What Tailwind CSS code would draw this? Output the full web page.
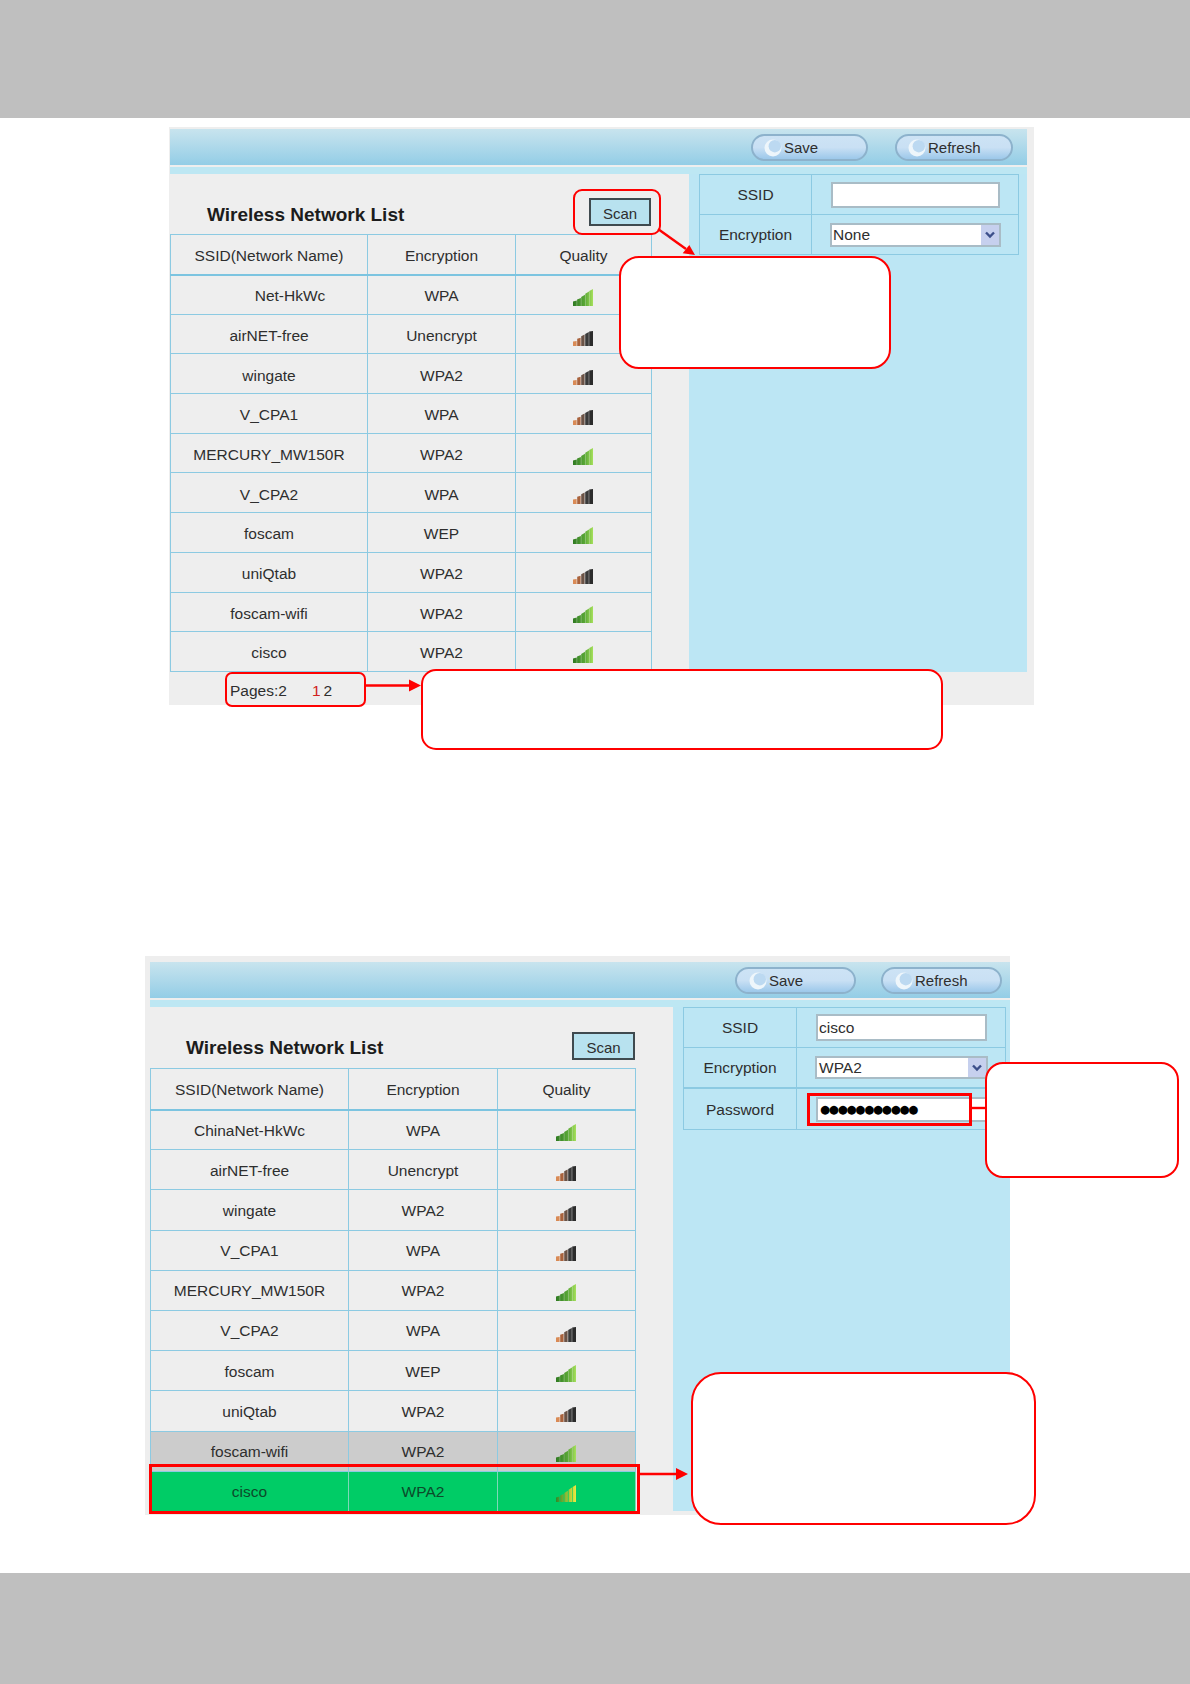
<!DOCTYPE html>
<html lang="en">
<head>
  <meta charset="UTF-8" />
  <title>Wireless Network List</title>
  <script src="https://cdn.jsdelivr.net/npm/@tailwindcss/browser@4"></script>
</head>
<body class="bg-white">

<!-- signal icons, reused in every table row -->
<svg width="0" height="0" class="absolute">
  <defs>
    <linearGradient id="barGreen" x1="0" x2="1" y1="0" y2="0"><stop offset="0" stop-color="#2f7a22" /><stop offset="0.6" stop-color="#5aa836" /><stop offset="1" stop-color="#a6e05c" /></linearGradient>
    <linearGradient id="barLime" x1="0" x2="1" y1="0" y2="0"><stop offset="0" stop-color="#2f8a2a" /><stop offset="1" stop-color="#eee840" /></linearGradient>
    <symbol id="sigGreen" viewBox="0 0 20 17">
      <path d="M0 12.5l3.8-1V17H0zM4.1 10.6l3.8-1.5V17H4.1zM8.2 8l3.8-2.2V17H8.2zM12.3 4.8L16 2.4V17h-3.7zM16.3 2L20 0v17h-3.7z" fill="url(#barGreen)" />
    </symbol>
    <symbol id="sigWeak" viewBox="0 0 20 17">
      <path d="M0 12.5l3.6-.6V17H0z" fill="#d98a55" />
      <path d="M4.2 9.8l3.4-1V17H4.2z" fill="#a8623c" />
      <path d="M8.2 7.2l3.4-1.6V17H8.2z" fill="#6b5346" />
      <path d="M12.2 5l3.6-2V17h-3.6z" fill="#3a3a3a" />
      <path d="M16.2 2.6L20 2v15h-3.8z" fill="#2b2b2b" />
    </symbol>
    <symbol id="sigLime" viewBox="0 0 20 17">
      <path d="M0 12.5l3.4-1V17H0zM4.2 10.6l3.4-1.5V17H4.2zM8.4 8l3.4-2.2V17H8.4zM12.6 4.8L16 2.4V17h-3.4zM16.6 2L20 0v17h-3.4z" fill="url(#barLime)" />
    </symbol>
    <symbol id="ring" viewBox="0 0 18 18">
      <circle cx="9" cy="9" r="8.5" fill="#eef6fb" />
      <circle cx="10.8" cy="7.2" r="6.2" fill="#bcd9f1" />
    </symbol>
  </defs>
</svg>

<div class="relative h-[1684px] flex flex-col font-['Liberation_Sans',sans-serif] text-[15px] text-[#2e2e2e] overflow-hidden">
  <div class="h-[118px] bg-[#bfbfbf]"></div>

  <!-- first panel -->
  <section class="mt-[9px] ml-[169px] w-[865px] h-[578px] bg-[#eeeeee] pt-[2px] pl-[1px]">
    <div class="h-[36px] w-[857px] bg-gradient-to-b from-[#c8e4ee] to-[#93cde6] flex justify-end items-start pt-[5px] pr-[14px] gap-[27px]">
      <div class="w-[117px] h-[27px] pt-[1px] rounded-full border-[2.5px] border-[#8db2cc] bg-gradient-to-b from-[#cde3f5] via-[#c9e0f4] to-[#9cc8ea] flex items-center pl-[11px] gap-[2px]"><svg class="w-[18px] h-[18px]"><use href="#ring" /></svg><span>Save</span></div>
      <div class="w-[118px] h-[27px] pt-[1px] rounded-full border-[2.5px] border-[#8db2cc] bg-gradient-to-b from-[#cde3f5] via-[#c9e0f4] to-[#9cc8ea] flex items-center pl-[11px] gap-[2px]"><svg class="w-[18px] h-[18px]"><use href="#ring" /></svg><span>Refresh</span></div>
    </div>
    <div class="mt-[2px] h-[7px] w-[857px] bg-[#bde7f3]"></div>
    <div class="flex w-[857px]">
      <div class="w-[519px]">
        <div class="h-[60px] w-[481px] flex items-end justify-between">
          <h2 class="ml-[37px] mb-[7px] text-[19px] leading-[24px] font-bold text-[#1c1c1c]">Wireless Network List</h2>
          <button class="mb-[8px] w-[62px] h-[28px] pt-[3px] bg-[#b8e2ef] border-2 border-[#3f4a4f]">Scan</button>
        </div>
        <table class="table-fixed border-collapse w-[481px] text-center text-[15.5px]">
          <colgroup><col class="w-[197px]" /><col class="w-[148px]" /><col class="w-[136px]" /></colgroup>
          <thead>
            <tr class="h-[40px] border-b-2 border-[#7cc4e0]"><th class="font-normal pt-[2px] border border-[#8ccae2]">SSID(Network Name)</th><th class="font-normal pt-[2px] border border-[#8ccae2]">Encryption</th><th class="font-normal pt-[2px] border border-[#8ccae2]">Quality</th></tr>
          </thead>
          <tbody>
            <tr class="h-[39.7px]"><td class="pt-[3px] border border-[#8ccae2] pl-[42px]">Net-HkWc</td><td class="pt-[3px] border border-[#8ccae2]">WPA</td><td class="pr-[2px] border border-[#8ccae2]"><svg class="w-[20px] h-[17px] mx-auto mt-[6px]"><use href="#sigGreen" /></svg></td></tr>
            <tr class="h-[39.7px]"><td class="pt-[3px] border border-[#8ccae2]">airNET-free</td><td class="pt-[3px] border border-[#8ccae2]">Unencrypt</td><td class="pr-[2px] border border-[#8ccae2]"><svg class="w-[20px] h-[17px] mx-auto mt-[6px]"><use href="#sigWeak" /></svg></td></tr>
            <tr class="h-[39.7px]"><td class="pt-[3px] border border-[#8ccae2]">wingate</td><td class="pt-[3px] border border-[#8ccae2]">WPA2</td><td class="pr-[2px] border border-[#8ccae2]"><svg class="w-[20px] h-[17px] mx-auto mt-[6px]"><use href="#sigWeak" /></svg></td></tr>
            <tr class="h-[39.7px]"><td class="pt-[3px] border border-[#8ccae2]">V_CPA1</td><td class="pt-[3px] border border-[#8ccae2]">WPA</td><td class="pr-[2px] border border-[#8ccae2]"><svg class="w-[20px] h-[17px] mx-auto mt-[6px]"><use href="#sigWeak" /></svg></td></tr>
            <tr class="h-[39.7px]"><td class="pt-[3px] border border-[#8ccae2]">MERCURY_MW150R</td><td class="pt-[3px] border border-[#8ccae2]">WPA2</td><td class="pr-[2px] border border-[#8ccae2]"><svg class="w-[20px] h-[17px] mx-auto mt-[6px]"><use href="#sigGreen" /></svg></td></tr>
            <tr class="h-[39.7px]"><td class="pt-[3px] border border-[#8ccae2]">V_CPA2</td><td class="pt-[3px] border border-[#8ccae2]">WPA</td><td class="pr-[2px] border border-[#8ccae2]"><svg class="w-[20px] h-[17px] mx-auto mt-[6px]"><use href="#sigWeak" /></svg></td></tr>
            <tr class="h-[39.7px]"><td class="pt-[3px] border border-[#8ccae2]">foscam</td><td class="pt-[3px] border border-[#8ccae2]">WEP</td><td class="pr-[2px] border border-[#8ccae2]"><svg class="w-[20px] h-[17px] mx-auto mt-[6px]"><use href="#sigGreen" /></svg></td></tr>
            <tr class="h-[39.7px]"><td class="pt-[3px] border border-[#8ccae2]">uniQtab</td><td class="pt-[3px] border border-[#8ccae2]">WPA2</td><td class="pr-[2px] border border-[#8ccae2]"><svg class="w-[20px] h-[17px] mx-auto mt-[6px]"><use href="#sigWeak" /></svg></td></tr>
            <tr class="h-[39.7px]"><td class="pt-[3px] border border-[#8ccae2]">foscam-wifi</td><td class="pt-[3px] border border-[#8ccae2]">WPA2</td><td class="pr-[2px] border border-[#8ccae2]"><svg class="w-[20px] h-[17px] mx-auto mt-[6px]"><use href="#sigGreen" /></svg></td></tr>
            <tr class="h-[39.7px]"><td class="pt-[3px] border border-[#8ccae2]">cisco</td><td class="pt-[3px] border border-[#8ccae2]">WPA2</td><td class="pr-[2px] border border-[#8ccae2]"><svg class="w-[20px] h-[17px] mx-auto mt-[6px]"><use href="#sigGreen" /></svg></td></tr>
          </tbody>
        </table>
        <div class="ml-[60px] mt-[10px] leading-[18px] text-[15.5px]">Pages:2<span class="ml-[25px] text-[#d02020]">1</span><span class="ml-[3px]">2</span></div>
      </div>
      <div class="w-[338px] h-[498px] bg-[#bce6f4] pl-[10px] text-[15.5px]">
        <div class="w-[320px] border border-[#8ccae2]">
          <div class="flex h-[40px] border-b border-[#8ccae2]">
            <div class="w-[112px] pt-[1px] border-r border-[#8ccae2] flex items-center justify-center">SSID</div>
            <div class="flex-1 flex items-center pl-[19px]"><input class="w-[169px] h-[26px] bg-white border-2 border-[#a9bcc6]" /></div>
          </div>
          <div class="flex h-[39px]">
            <div class="w-[112px] pt-[1px] border-r border-[#8ccae2] flex items-center justify-center">Encryption</div>
            <div class="flex-1 flex items-center pl-[18px]">
              <div class="w-[171px] h-[24px] bg-white border-2 border-[#a9bcc6] flex items-center justify-between pl-[1px]">None<span class="w-[18px] h-[20px] bg-[#c6d0ee] flex items-center justify-center"><svg class="w-[10px] h-[8px]" viewBox="0 0 10 8"><path d="M1 1.5l4 4 4-4" fill="none" stroke="#3c4f8a" stroke-width="2.4" /></svg></span></div>
            </div>
          </div>
        </div>
      </div>
    </div>
  </section>

  <!-- second panel -->
  <section class="mt-[251px] ml-[145px] w-[865px] h-[559px] bg-[#eeeeee] pt-[6px] pl-[5px]">
    <div class="h-[36px] bg-gradient-to-b from-[#c8e4ee] to-[#93cde6] flex justify-end items-start pt-[5px] pr-[8px] gap-[25px]">
      <div class="w-[121px] h-[27px] pt-[1px] rounded-full border-[2.5px] border-[#8db2cc] bg-gradient-to-b from-[#cde3f5] via-[#c9e0f4] to-[#9cc8ea] flex items-center pl-[12px] gap-[2px]"><svg class="w-[18px] h-[18px]"><use href="#ring" /></svg><span>Save</span></div>
      <div class="w-[121px] h-[27px] pt-[1px] rounded-full border-[2.5px] border-[#8db2cc] bg-gradient-to-b from-[#cde3f5] via-[#c9e0f4] to-[#9cc8ea] flex items-center pl-[12px] gap-[2px]"><svg class="w-[18px] h-[18px]"><use href="#ring" /></svg><span>Refresh</span></div>
    </div>
    <div class="mt-[2px] h-[7px] bg-[#bde7f3]"></div>
    <div class="flex">
      <div class="w-[523px]">
        <div class="h-[61px] w-[485px] flex items-end justify-between">
          <h2 class="ml-[36px] mb-[8px] text-[19px] leading-[24px] font-bold text-[#1c1c1c]">Wireless Network List</h2>
          <button class="mb-[8px] w-[63px] h-[28px] pt-[3px] bg-[#b8e2ef] border-2 border-[#3f4a4f]">Scan</button>
        </div>
        <table class="table-fixed border-collapse w-[485px] text-center text-[15.5px]">
          <colgroup><col class="w-[198px]" /><col class="w-[149px]" /><col class="w-[138px]" /></colgroup>
          <thead>
            <tr class="h-[41px] border-b-2 border-[#7cc4e0]"><th class="font-normal pt-[1px] border border-[#8ccae2]">SSID(Network Name)</th><th class="font-normal pt-[1px] border border-[#8ccae2]">Encryption</th><th class="font-normal pt-[1px] border border-[#8ccae2]">Quality</th></tr>
          </thead>
          <tbody>
            <tr class="h-[40.2px]"><td class="pt-[1px] border border-[#8ccae2]">ChinaNet-HkWc</td><td class="pt-[1px] border border-[#8ccae2]">WPA</td><td class="pr-[2px] border border-[#8ccae2]"><svg class="w-[20px] h-[17px] mx-auto mt-[5px]"><use href="#sigGreen" /></svg></td></tr>
            <tr class="h-[40.2px]"><td class="pt-[1px] border border-[#8ccae2]">airNET-free</td><td class="pt-[1px] border border-[#8ccae2]">Unencrypt</td><td class="pr-[2px] border border-[#8ccae2]"><svg class="w-[20px] h-[17px] mx-auto mt-[5px]"><use href="#sigWeak" /></svg></td></tr>
            <tr class="h-[40.2px]"><td class="pt-[1px] border border-[#8ccae2]">wingate</td><td class="pt-[1px] border border-[#8ccae2]">WPA2</td><td class="pr-[2px] border border-[#8ccae2]"><svg class="w-[20px] h-[17px] mx-auto mt-[5px]"><use href="#sigWeak" /></svg></td></tr>
            <tr class="h-[40.2px]"><td class="pt-[1px] border border-[#8ccae2]">V_CPA1</td><td class="pt-[1px] border border-[#8ccae2]">WPA</td><td class="pr-[2px] border border-[#8ccae2]"><svg class="w-[20px] h-[17px] mx-auto mt-[5px]"><use href="#sigWeak" /></svg></td></tr>
            <tr class="h-[40.2px]"><td class="pt-[1px] border border-[#8ccae2]">MERCURY_MW150R</td><td class="pt-[1px] border border-[#8ccae2]">WPA2</td><td class="pr-[2px] border border-[#8ccae2]"><svg class="w-[20px] h-[17px] mx-auto mt-[5px]"><use href="#sigGreen" /></svg></td></tr>
            <tr class="h-[40.2px]"><td class="pt-[1px] border border-[#8ccae2]">V_CPA2</td><td class="pt-[1px] border border-[#8ccae2]">WPA</td><td class="pr-[2px] border border-[#8ccae2]"><svg class="w-[20px] h-[17px] mx-auto mt-[5px]"><use href="#sigWeak" /></svg></td></tr>
            <tr class="h-[40.2px]"><td class="pt-[1px] border border-[#8ccae2]">foscam</td><td class="pt-[1px] border border-[#8ccae2]">WEP</td><td class="pr-[2px] border border-[#8ccae2]"><svg class="w-[20px] h-[17px] mx-auto mt-[5px]"><use href="#sigGreen" /></svg></td></tr>
            <tr class="h-[40.2px]"><td class="pt-[1px] border border-[#8ccae2]">uniQtab</td><td class="pt-[1px] border border-[#8ccae2]">WPA2</td><td class="pr-[2px] border border-[#8ccae2]"><svg class="w-[20px] h-[17px] mx-auto mt-[5px]"><use href="#sigWeak" /></svg></td></tr>
            <tr class="h-[40.2px] bg-[#cccccc]"><td class="pt-[1px] border border-[#8ccae2]">foscam-wifi</td><td class="pt-[1px] border border-[#8ccae2]">WPA2</td><td class="pr-[2px] border border-[#8ccae2]"><svg class="w-[20px] h-[17px] mx-auto mt-[5px]"><use href="#sigGreen" /></svg></td></tr>
            <tr class="h-[40.2px] bg-[#00cc66] text-[#0c4a2a]"><td class="pt-[1px] border border-[#7fd8b8]">cisco</td><td class="pt-[1px] border border-[#7fd8b8]">WPA2</td><td class="pr-[2px] border border-[#7fd8b8]"><svg class="w-[20px] h-[17px] mx-auto mt-[5px]"><use href="#sigLime" /></svg></td></tr>
          </tbody>
        </table>
      </div>
      <div class="w-[337px] h-[504px] bg-[#bce6f4] pl-[10px] text-[15.5px]">
        <div class="w-[323px] border border-[#8ccae2]">
          <div class="flex h-[40px] border-b border-[#8ccae2]">
            <div class="w-[113px] pt-[1px] border-r border-[#8ccae2] flex items-center justify-center">SSID</div>
            <div class="flex-1 flex items-center pl-[19px]"><input value="cisco" class="w-[171px] h-[27px] bg-white border-2 border-[#a9bcc6] pl-[1px]" /></div>
          </div>
          <div class="flex h-[41px] border-b-2 border-[#8ccae2]">
            <div class="w-[113px] pt-[1px] border-r border-[#8ccae2] flex items-center justify-center">Encryption</div>
            <div class="flex-1 flex items-center pl-[18px]">
              <div class="w-[173px] h-[23px] bg-white border-2 border-[#a9bcc6] flex items-center justify-between pl-[2px]">WPA2<span class="w-[18px] h-[19px] bg-[#c6d0ee] flex items-center justify-center"><svg class="w-[10px] h-[8px]" viewBox="0 0 10 8"><path d="M1 1.5l4 4 4-4" fill="none" stroke="#3c4f8a" stroke-width="2.4" /></svg></span></div>
            </div>
          </div>
          <div class="flex h-[40px]">
            <div class="w-[113px] pt-[1px] border-r border-[#8ccae2] flex items-center justify-center">Password</div>
            <div class="flex-1 flex items-center pl-[19px]"><input value="●●●●●●●●●●●" readonly class="w-[171px] h-[25px] bg-white border-2 border-[#a9bcc6] pl-[2px] font-['DejaVu_Sans'] text-[11.5px] tracking-[-1.2px] text-black" /></div>
          </div>
        </div>
      </div>
    </div>
  </section>

  <div class="mt-auto h-[111px] bg-[#bfbfbf]"></div>

  <!-- annotations drawn over the screenshots -->
  <div class="absolute left-[573px] top-[189px] w-[88px] h-[46px] border-2 border-[#ff0000] rounded-[9px]"></div>
  <div class="absolute left-[619px] top-[256px] w-[272px] h-[113px] bg-white border-2 border-[#ff0000] rounded-[20px]"></div>
  <div class="absolute left-[225px] top-[672px] w-[141px] h-[35px] border-2 border-[#ff0000] rounded-[7px]"></div>
  <div class="absolute left-[421px] top-[669px] w-[522px] h-[81px] bg-white border-2 border-[#ff0000] rounded-[15px]"></div>
  <div class="absolute left-[807px] top-[1093px] w-[165px] h-[33px] border-[3px] border-[#ff0000]"></div>
  <div class="absolute left-[985px] top-[1062px] w-[194px] h-[116px] bg-white border-2 border-[#ff0000] rounded-[18px]"></div>
  <div class="absolute left-[149px] top-[1464px] w-[491px] h-[50px] border-[3px] border-[#ff0000]"></div>
  <div class="absolute left-[691px] top-[1372px] w-[345px] h-[153px] bg-white border-2 border-[#ff0000] rounded-[30px]"></div>

  <svg class="absolute inset-0 w-full h-full pointer-events-none" viewBox="0 0 1190 1684">
    <path d="M658 229L686 249" stroke="#ff0000" stroke-width="2.4" />
    <path d="M695 255L682.7 253.3 689.3 245z" fill="#ff0000" />
    <path d="M366 685.5H410" stroke="#ff0000" stroke-width="2.6" />
    <path d="M421 685.5L409 679.5V691.5z" fill="#ff0000" />
    <path d="M972 1108H985" stroke="#ff0000" stroke-width="2.4" />
    <path d="M640 1474H678" stroke="#ff0000" stroke-width="2.6" />
    <path d="M688 1474L676 1468V1480z" fill="#ff0000" />
  </svg>
</div>

</body>
</html>
